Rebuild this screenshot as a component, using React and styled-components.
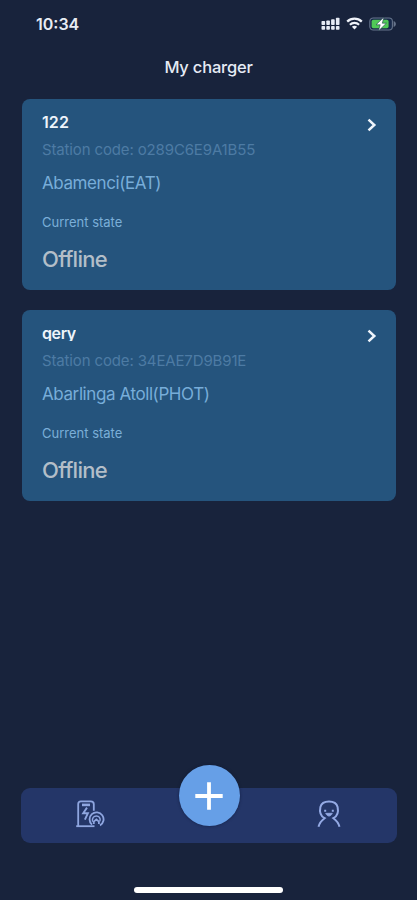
import React from "react";
import styled, { createGlobalStyle } from "styled-components";

const chargers = [
  {
    name: "122",
    code: "o289C6E9A1B55",
    place: "Abamenci(EAT)",
    state: "Offline",
    nameSpacing: "0.1px",
  },
  {
    name: "qery",
    code: "34EAE7D9B91E",
    place: "Abarlinga Atoll(PHOT)",
    state: "Offline",
    nameSpacing: "-0.4px",
  },
];

const SignalIcon = () => (
  <svg width="19" height="14" viewBox="0 0 19 14" fill="#e6ebf5">
    <rect x="0.5" y="4" width="3.6" height="4" rx="0.8" />
    <rect x="5.3" y="3.4" width="3.6" height="4.6" rx="0.8" />
    <rect x="10.1" y="2.2" width="3.6" height="5.8" rx="0.8" />
    <rect x="14.9" y="0.8" width="3.6" height="7.2" rx="0.8" />
    <rect x="0.5" y="9" width="3.6" height="3.8" rx="0.8" />
    <rect x="5.3" y="9" width="3.6" height="3.8" rx="0.8" />
    <rect x="10.1" y="9" width="3.6" height="3.8" rx="0.8" />
    <rect x="14.9" y="9" width="3.6" height="3.8" rx="0.8" />
  </svg>
);

const WifiIcon = () => (
  <svg width="17" height="13" viewBox="0 0 17 13" fill="none" stroke="#f0f3fa">
    <path d="M1.2 4.6C5.3 0.7 11.7 0.7 15.8 4.6" strokeWidth="2.3" />
    <path d="M3.9 7.7C6.5 5.2 10.5 5.2 13.1 7.7" strokeWidth="2.1" />
    <path d="M5.9 9.7C7.4 8.4 9.6 8.4 11.1 9.7L8.5 12.4Z" fill="#f0f3fa" stroke="none" />
  </svg>
);

const BatteryIcon = () => (
  <svg width="28" height="14" viewBox="0 0 28 14">
    <rect x="0.8" y="1" width="22.6" height="12" rx="3.4" fill="#18294a" stroke="#66748b" strokeWidth="1.1" />
    <path d="M24.6 4C27.6 5.2 27.6 8.8 24.6 10Z" fill="#66748b" />
    <rect x="2.6" y="2.8" width="17" height="8.4" rx="1.8" fill="#50c957" />
    <path
      d="M15 0L7 7.8H11.2L9.4 14L17.4 6.2H13.3Z"
      fill="#ffffff"
      stroke="#1d3f48"
      strokeWidth="0.6"
    />
  </svg>
);

const ArrowIcon = () => (
  <svg width="10" height="14" viewBox="0 0 10 14" fill="none" stroke="#eef4fb" strokeWidth="2.5">
    <path d="M1.5 1.6L7.3 7L1.5 12.4" />
  </svg>
);

const StationIcon = () => (
  <svg width="30" height="28" viewBox="0 0 30 28" fill="none" stroke="#8fa6e0" strokeWidth="1.8">
    <path d="M3.2 26V4Q3.2 1.4 5.8 1.4H15.8Q18.8 1.4 18.8 4.2V10.8" />
    <path d="M1.2 26.2H19.5" />
    <path d="M7 4.9H15" strokeWidth="2.6" />
    <path d="M12 7.6L8.2 13.2H12.9L9.9 19.6" strokeWidth="1.9" />
    <path d="M17 24.6A7 7 0 1 1 25 25.4" />
    <path d="M17.6 21.8C16.6 17.8 19 15.9 21.4 15.9C23.8 15.9 26 18 24.9 21.2" strokeWidth="1.5" />
    <path d="M18.8 24V21.6L21.4 19.4L23.9 21.6V24" strokeWidth="1.8" />
  </svg>
);

const PersonIcon = () => (
  <svg width="24" height="28" viewBox="0 0 24 28" fill="none" stroke="#94aae5" strokeWidth="2">
    <path d="M1.5 26.8C2.4 23.4 4.2 20.6 7.6 18.2C2.9 15.8 2.6 10.8 3.4 7C4.4 3 7.6 1.5 12 1.5C16.4 1.5 19.6 3 20.6 7C21.4 10.8 21.1 15.8 16.4 18.2C19.8 20.6 21.6 23.4 22.5 26.8" />
    <path d="M8.2 9.8V11.8M15.8 9.8V11.8" />
    <path d="M8.7 13.3C10.4 17 13.6 17 15.3 13.3Z" fill="#94aae5" strokeWidth="0.8" />
  </svg>
);

const PlusIcon = () => (
  <svg width="28" height="28" viewBox="0 0 28 28" stroke="#ffffff" strokeWidth="3.8">
    <path d="M14 0.3V27.7M0.3 14H27.7" />
  </svg>
);

const ChargerCard = ({ charger }) => {
  return (
    <Card>
      <CardHead>
        <Name $spacing={charger.nameSpacing}>{charger.name}</Name>
        <ArrowIcon />
      </CardHead>
      <Code>Station code: {charger.code}</Code>
      <Place>{charger.place}</Place>
      <StateLabel>Current state</StateLabel>
      <StateValue>{charger.state}</StateValue>
    </Card>
  );
};

const App = () => {
  return (
    <>
      <GlobalStyle />
      <Screen>
        <StatusBar>
          <Clock>10:34</Clock>
          <StatusIcons>
            <SignalIcon />
            <WifiIcon />
            <BatteryIcon />
          </StatusIcons>
        </StatusBar>
        <Title>My charger</Title>
        <CardList>
          {chargers.map((charger) => (
            <ChargerCard key={charger.name} charger={charger} />
          ))}
        </CardList>
        <NavBar>
          <NavItem>
            <StationIcon />
          </NavItem>
          <AddButton aria-label="Add">
            <PlusIcon />
          </AddButton>
          <NavItem>
            <PersonIcon />
          </NavItem>
        </NavBar>
        <HomeIndicator />
      </Screen>
    </>
  );
};

export default App;

const GlobalStyle = createGlobalStyle`
  * {
    box-sizing: border-box;
  }
  body {
    margin: 0;
    background: #18233c;
    font-family: Inter, "Liberation Sans", sans-serif;
  }
  svg {
    display: block;
    flex-shrink: 0;
  }
`;

const Screen = styled.div`
  width: 417px;
  height: 900px;
  display: flex;
  flex-direction: column;
  background: #18233c;
  overflow: hidden;
`;
const StatusBar = styled.div`
  height: 47px;
  padding: 0 20px 0 36px;
  display: flex;
  align-items: center;
  justify-content: space-between;
`;
const Clock = styled.div`
  font-size: 16px;
  font-weight: 600;
  color: #e8ecf4;
`;
const StatusIcons = styled.div`
  display: flex;
  align-items: center;
  gap: 6px;
`;
const Title = styled.h1`
  margin: 0;
  height: 40px;
  line-height: 40px;
  text-align: center;
  font-size: 16.5px;
  font-weight: 500;
  letter-spacing: -0.2px;
  color: #e6ebf5;
`;
const CardList = styled.div`
  flex: 1;
  padding: 12px 21px 0 22px;
  display: flex;
  flex-direction: column;
  gap: 20px;
`;
const Card = styled.div`
  height: 191px;
  padding: 14px 19px 0 20px;
  border-radius: 8px;
  background: #25547d;
`;
const CardHead = styled.div`
  height: 26px;
  display: flex;
  justify-content: space-between;
  svg {
    margin-top: 5px;
  }
`;
const Name = styled.div`
  height: 17px;
  line-height: 19px;
  overflow: hidden;
  font-size: 16px;
  font-weight: 600;
  letter-spacing: ${(props) => props.$spacing};
  color: #eef4fb;
`;
const Code = styled.div`
  height: 22px;
  line-height: 22px;
  font-size: 15px;
  letter-spacing: -0.14px;
  color: #4d7ba4;
`;
const Place = styled.div`
  margin-top: 10px;
  height: 24px;
  line-height: 24px;
  font-size: 17px;
  letter-spacing: -0.41px;
  color: #78add9;
`;
const StateLabel = styled.div`
  margin-top: 17px;
  height: 20px;
  line-height: 20px;
  font-size: 13px;
  color: #7bafd8;
`;
const StateValue = styled.div`
  margin-top: 12px;
  height: 30px;
  line-height: 30px;
  font-size: 22px;
  font-weight: 500;
  letter-spacing: -0.7px;
  color: #b3bec8;
`;
const NavBar = styled.div`
  height: 55px;
  margin: 0 20px 0 21px;
  display: flex;
  align-items: center;
  justify-content: center;
  gap: 74px;
  border-radius: 9px;
  background: #243668;
`;
const NavItem = styled.div`
  width: 30px;
  height: 100%;
  padding-bottom: 4px;
  display: flex;
  align-items: center;
  justify-content: center;
`;
const AddButton = styled.button`
  width: 61px;
  height: 61px;
  margin-top: -40px;
  padding: 0;
  display: flex;
  align-items: center;
  justify-content: center;
  border: none;
  border-radius: 50%;
  background: #669fe7;
  box-shadow: 0 0 3px rgba(10, 20, 50, 0.6);
`;
const HomeIndicator = styled.div`
  width: 149px;
  height: 6px;
  margin: 44px auto 7px;
  border-radius: 3px;
  background: #ffffff;
`;
